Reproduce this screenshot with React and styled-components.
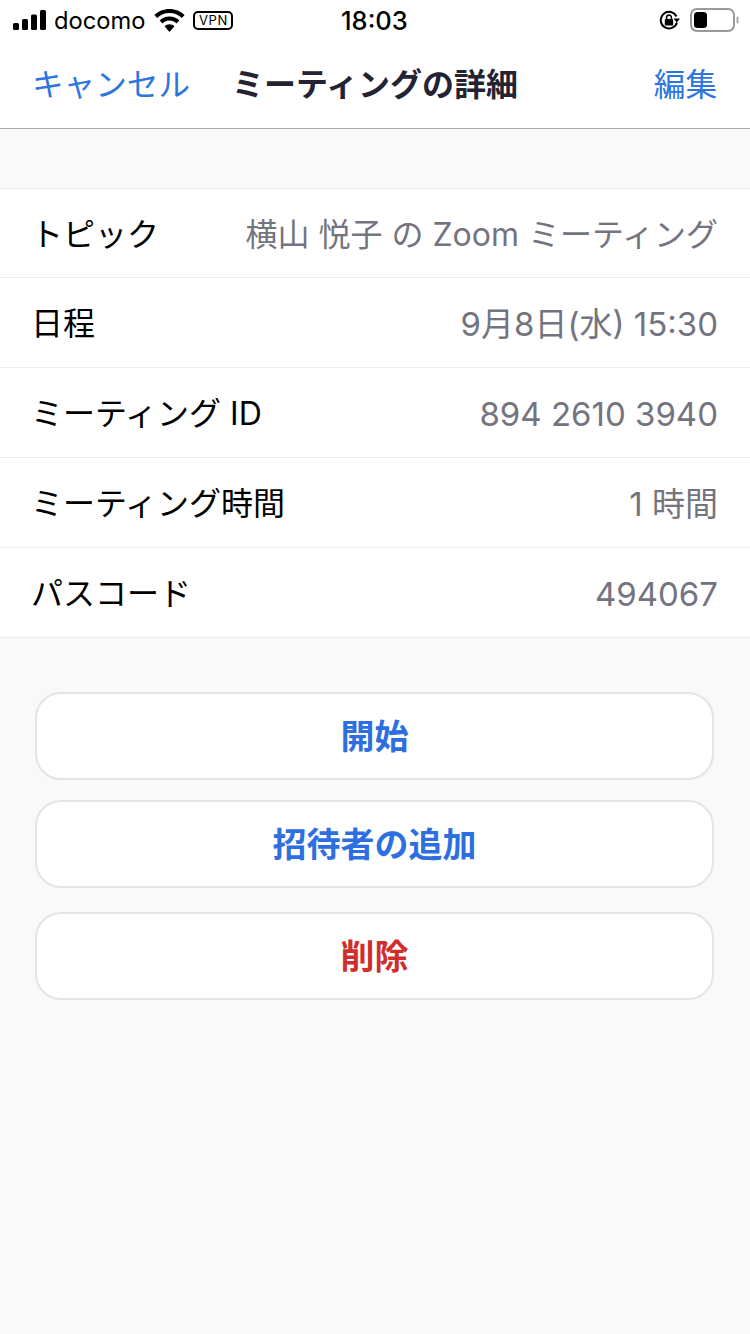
import React from 'react';
import styled, { createGlobalStyle } from 'styled-components';

const GlobalStyle = createGlobalStyle`
  html, body {
    margin: 0;
    padding: 0;
    background: #f9f9f9;
  }
  * {
    box-sizing: border-box;
  }
`;

const Page = styled.div`
  width: 750px;
  height: 1334px;
  overflow: hidden;
  background: #f9f9f9;
  font-family: "Inter", "Noto Sans CJK JP", sans-serif;
  color: #000;
`;

const Header = styled.header`
  background: #fff;
  height: 129px;
  border-bottom: 1px solid #a9a9ab;
`;

const StatusBar = styled.div`
  position: relative;
  height: 40px;
  padding: 0 11px 0 13px;
  display: flex;
  align-items: center;
  justify-content: space-between;
`;

const StatusGroup = styled.div`
  display: flex;
  align-items: center;
  gap: ${(p) => p.$gap || 0}px;
`;

const Carrier = styled.span`
  font-size: 23.7px;
  margin: 0 9px 0 8px;
`;

const Clock = styled.span`
  position: absolute;
  left: 341px;
  top: 6px;
  font-size: 25.5px;
  font-weight: 500;
  line-height: 30px;
`;

const VpnBadge = styled.span`
  margin-left: 8px;
  width: 40px;
  height: 19px;
  border: 2px solid #000;
  border-radius: 5px;
  font-size: 13px;
  font-weight: 400;
  line-height: 15px;
  text-align: center;
  letter-spacing: 0.6px;
`;

const NavBar = styled.nav`
  position: relative;
  height: 88px;
  padding: 2px 33px 0 32px;
  display: flex;
  align-items: center;
  justify-content: space-between;
  line-height: 44px;
`;

const NavLink = styled.span`
  font-size: ${(p) => p.$size}px;
  color: #2d75e0;
`;

const NavTitle = styled.h1`
  position: absolute;
  left: 232px;
  top: 23px;
  margin: 0;
  font-size: 32px;
  font-weight: 700;
  line-height: 44px;
  color: #232333;
  white-space: nowrap;
`;

const List = styled.section`
  margin-top: 59px;
  background: #fff;
  border-top: 1px solid #ededed;
`;

const Row = styled.div`
  height: 90px;
  padding: 3px 32px 0 31px;
  display: flex;
  align-items: center;
  justify-content: space-between;
  border-bottom: 1px solid #ededed;
  line-height: 40px;
  white-space: nowrap;

  &:first-child {
    height: 89px;
  }
`;

const Label = styled.span`
  font-size: 32px;
  color: #000;
`;

const Value = styled.span`
  font-size: ${(p) => p.$size}px;
  color: #747480;
`;

const Actions = styled.div`
  padding: 54px 36px 0 35px;
  display: flex;
  flex-direction: column;
`;

const ActionButton = styled.button`
  height: 88px;
  margin-top: ${(p) => p.$gap}px;
  background: #fff;
  border: 2px solid #e4e4e4;
  border-radius: 26px;
  font-family: inherit;
  font-size: 34px;
  font-weight: 700;
  line-height: 44px;
  padding: 1px 0 0;
  color: ${(p) => (p.$danger ? '#cf2f2b' : '#2d6fe0')};
`;

const SignalIcon = () => (
  <svg width="33" height="20" viewBox="0 0 33 20">
    <rect x="0" y="13" width="6" height="7" rx="1.5" />
    <rect x="9" y="9" width="6" height="11" rx="1.5" />
    <rect x="18" y="4.5" width="6" height="15.5" rx="1.5" />
    <rect x="27" y="0" width="6" height="20" rx="1.5" />
  </svg>
);

const WifiIcon = () => (
  <svg width="31" height="23" viewBox="0 0 31 23">
    <path d="M15.5 0C9.6 0 4.3 2.3.4 6.1l2.7 2.8c3.2-3.1 7.6-5 12.4-5s9.2 1.9 12.4 5l2.7-2.8C26.7 2.3 21.4 0 15.5 0z" />
    <path d="M15.5 7.6c-3.8 0-7.3 1.5-9.8 4l2.8 2.8c1.8-1.8 4.3-2.9 7-2.9s5.2 1.1 7 2.9l2.8-2.8c-2.5-2.5-6-4-9.8-4z" />
    <path d="M15.5 15.2c-1.9 0-3.7.8-5 2l5 5.8 5-5.8c-1.3-1.2-3.1-2-5-2z" />
  </svg>
);

const RotationLockIcon = () => (
  <svg width="22" height="20" viewBox="0 0 22 20">
    <path d="M17.5 6.5A8.3 8.3 0 1 0 18 12.5" fill="none" stroke="#000" strokeWidth="2" />
    <path d="M14.5 8.5h6.5l-3.2 4z" />
    <rect x="5.8" y="9" width="8.4" height="6.5" rx="1" />
    <path d="M7.6 9.5V7.5a2.4 2.4 0 0 1 4.8 0v2" fill="none" stroke="#000" strokeWidth="1.5" />
  </svg>
);

const BatteryIcon = () => (
  <svg width="49" height="24" viewBox="0 0 49 24">
    <rect x="1" y="1" width="43" height="22" rx="6" fill="none" stroke="#9a9a9a" strokeWidth="2" />
    <rect x="4" y="4" width="13" height="16" rx="3.5" />
    <rect x="46.5" y="8.5" width="2" height="7" rx="1" fill="#a8a8a8" />
  </svg>
);

const rows = [
  { label: 'トピック', value: '横山 悦子 の Zoom ミーティング', size: 32 },
  { label: '日程', value: '9月8日(水) 15:30', size: 33 },
  { label: 'ミーティング ID', value: '894 2610 3940', size: 33 },
  { label: 'ミーティング時間', value: '1 時間', size: 33 },
  { label: 'パスコード', value: '494067', size: 33 },
];

const App = () => (
  <Page>
    <GlobalStyle />
    <Header>
      <StatusBar>
        <StatusGroup>
          <SignalIcon />
          <Carrier>docomo</Carrier>
          <WifiIcon />
          <VpnBadge>VPN</VpnBadge>
        </StatusGroup>
        <Clock>18:03</Clock>
        <StatusGroup $gap={9}>
          <RotationLockIcon />
          <BatteryIcon />
        </StatusGroup>
      </StatusBar>
      <NavBar>
        <NavLink $size={31.6}>キャンセル</NavLink>
        <NavTitle>ミーティングの詳細</NavTitle>
        <NavLink $size={31.6}>編集</NavLink>
      </NavBar>
    </Header>
    <List>
      {rows.map((row) => (
        <Row key={row.label}>
          <Label>{row.label}</Label>
          <Value $size={row.size}>{row.value}</Value>
        </Row>
      ))}
    </List>
    <Actions>
      <ActionButton $gap={0}>開始</ActionButton>
      <ActionButton $gap={20}>招待者の追加</ActionButton>
      <ActionButton $gap={24} $danger>削除</ActionButton>
    </Actions>
  </Page>
);

export default App;
